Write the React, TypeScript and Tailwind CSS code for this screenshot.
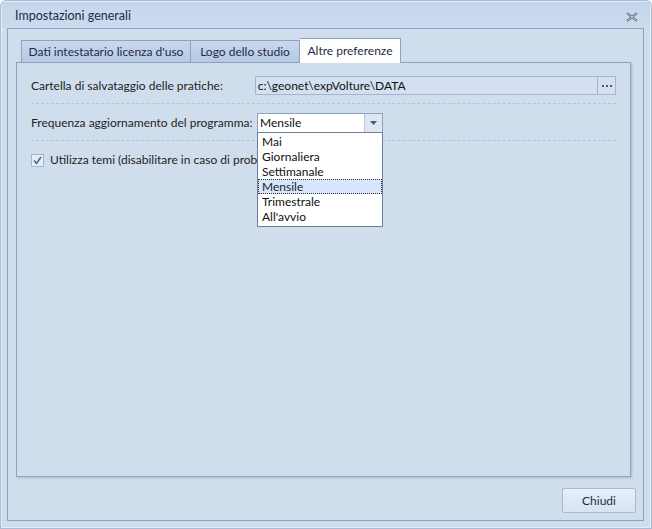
import React from "react";

const tabs = [
  { t: "Dati intestatario licenza d'uso", w: "w-[170px]" },
  { t: "Logo dello studio", w: "w-[109px]" },
  { t: "Altre preferenze", w: "w-[101px]" },
];
const options = ["Mai", "Giornaliera", "Settimanale", "Mensile", "Trimestrale", "All'avvio"];

const Dashed = () => <div className="mx-[14px] border-t border-dashed border-[#b3c3d8]" />;

export default function App() {
  return (
    <div
      className="w-[652px] h-[529px] bg-[#a9bcd6] p-px rounded-t-[6px] text-[12px] text-[#1e1e1e]"
      style={{ fontFamily: "Lato, 'Noto Sans', sans-serif" }}
    >
      <div className="h-full rounded-t-[5px] border border-[#e7eef8] bg-[#d0dded] flex flex-col">
        {/* title bar */}
        <div className="h-[26px] flex items-center justify-between pl-[13px] pr-[12px] pt-[2px] bg-gradient-to-b from-[#c5d6ec] to-[#ccdaee]">
          <span className="text-[12.5px] text-[#1e2b45]">Impostazioni generali</span>
          <svg width="12" height="10" viewBox="0 0 12 10" className="mt-[2px]">
            <path d="M1 1 L11 9 M11 1 L1 9" stroke="#3b4a60" strokeWidth="2.2" />
            <path d="M1 1 L11 9 M11 1 L1 9" stroke="#fff" strokeWidth="0.8" />
          </svg>
        </div>

        {/* client area */}
        <div className="flex-1 ml-[5px] mr-[6px] mb-[6px] border border-[#8da2c1] flex flex-col pl-[8px] pr-[12px] pt-[8px] pb-[7px]">
          {/* tabs */}
          <div className="flex pl-[5px] h-[25px] items-end relative z-10">
            {tabs.map(({ t, w }, i) =>
              i === 2 ? (
                <div
                  key={t}
                  className={`${w} h-[25px] flex items-center justify-center bg-white border border-b-0 border-[#8da2c1] text-[#1e2b45] -mb-px border-l-0`}
                >
                  {t}
                </div>
              ) : (
                <div
                  key={t}
                  className={`${w} h-[22px] flex items-center justify-center bg-gradient-to-b from-[#c9d8ec] to-[#b5c9e3] border border-b-0 border-[#8da2c1] text-[#1e2b45] ${i === 1 ? "border-l-0" : ""}`}
                >
                  {t}
                </div>
              )
            )}
          </div>

          {/* panel */}
          <div className="h-[415px] border border-[#8da2c1] shadow-[1px_1px_2px_rgba(100,120,150,0.35)] bg-[#d0dded] pt-[13px] flex flex-col">
            <div className="flex items-center px-[14px] h-[19px]">
              <span className="w-[226px] whitespace-nowrap">Cartella di salvataggio delle pratiche:</span>
              <div className="w-[365px] h-[19px] flex border border-[#a4b5cd] bg-[#d4e0ef]">
                <div className="flex-1 px-[2px] flex items-center text-[#111]">c:\geonet\expVolture\DATA</div>
                <div className="w-[18px] border-l border-[#a4b5cd] flex items-center justify-center gap-[2px]">
                  <span className="w-[2px] h-[2px] bg-[#4b5a74]" />
                  <span className="w-[2px] h-[2px] bg-[#4b5a74]" />
                  <span className="w-[2px] h-[2px] bg-[#4b5a74]" />
                </div>
              </div>
            </div>
            <div className="h-[8px]" />
            <Dashed />
            <div className="h-[9px]" />
            <div className="flex items-center px-[14px] h-[20px] relative z-20">
              <span className="w-[226px] whitespace-nowrap">Frequenza aggiornamento del programma:</span>
              <div className="relative">
                <div className="w-[126px] h-[20px] flex border border-[#8da2c1] bg-white">
                  <div className="flex-1 px-[2px] flex items-center text-[#111]">Mensile</div>
                  <div className="w-[18px] border-l border-[#b8c6da] bg-[#dde6f2] flex items-center justify-center">
                    <svg width="7" height="4" viewBox="0 0 7 4">
                      <path d="M0 0 H7 L3.5 4 Z" fill="#4b5a74" />
                    </svg>
                  </div>
                </div>
                <div className="absolute left-0 top-[19px] w-[126px] border border-[#6e7f99] bg-white pt-[1px] pb-[2px]">
                  {options.map((o) =>
                    o === "Mensile" ? (
                      <div
                        key={o}
                        className="h-[15px] leading-[15px] px-[4px] bg-[#d6e6fb] outline-1 outline-dotted outline-[#333] -outline-offset-1"
                      >
                        {o}
                      </div>
                    ) : (
                      <div key={o} className="h-[15px] leading-[15px] px-[4px] text-[#111]">
                        {o}
                      </div>
                    )
                  )}
                </div>
              </div>
            </div>
            <div className="h-[7px]" />
            <Dashed />
            <div className="h-[10px]" />
            <div className="flex items-center px-[14px] gap-[6px]">
              <div className="w-[13px] h-[13px] shrink-0 border border-[#a4b5cd] bg-[#e4ecf6] flex items-center justify-center">
                <svg width="9" height="9" viewBox="0 0 9 9">
                  <path d="M1 4.5 L3.5 7.5 L8 1" stroke="#4a6a9a" strokeWidth="1.6" fill="none" />
                </svg>
              </div>
              <span className="w-[207px] overflow-hidden whitespace-nowrap">
                Utilizza temi (disabilitare in caso di problemi di visualizzazione)
              </span>
            </div>
          </div>

          {/* footer */}
          <div className="flex-1 flex items-end justify-end">
            <button className="w-[74px] h-[25px] mr-[-5px] rounded-[2px] border border-[#a9bad2] bg-gradient-to-b from-[#e6eefa] to-[#d7e3f3] text-[#1e2b45]">
              Chiudi
            </button>
          </div>
        </div>
      </div>
    </div>
  );
}
